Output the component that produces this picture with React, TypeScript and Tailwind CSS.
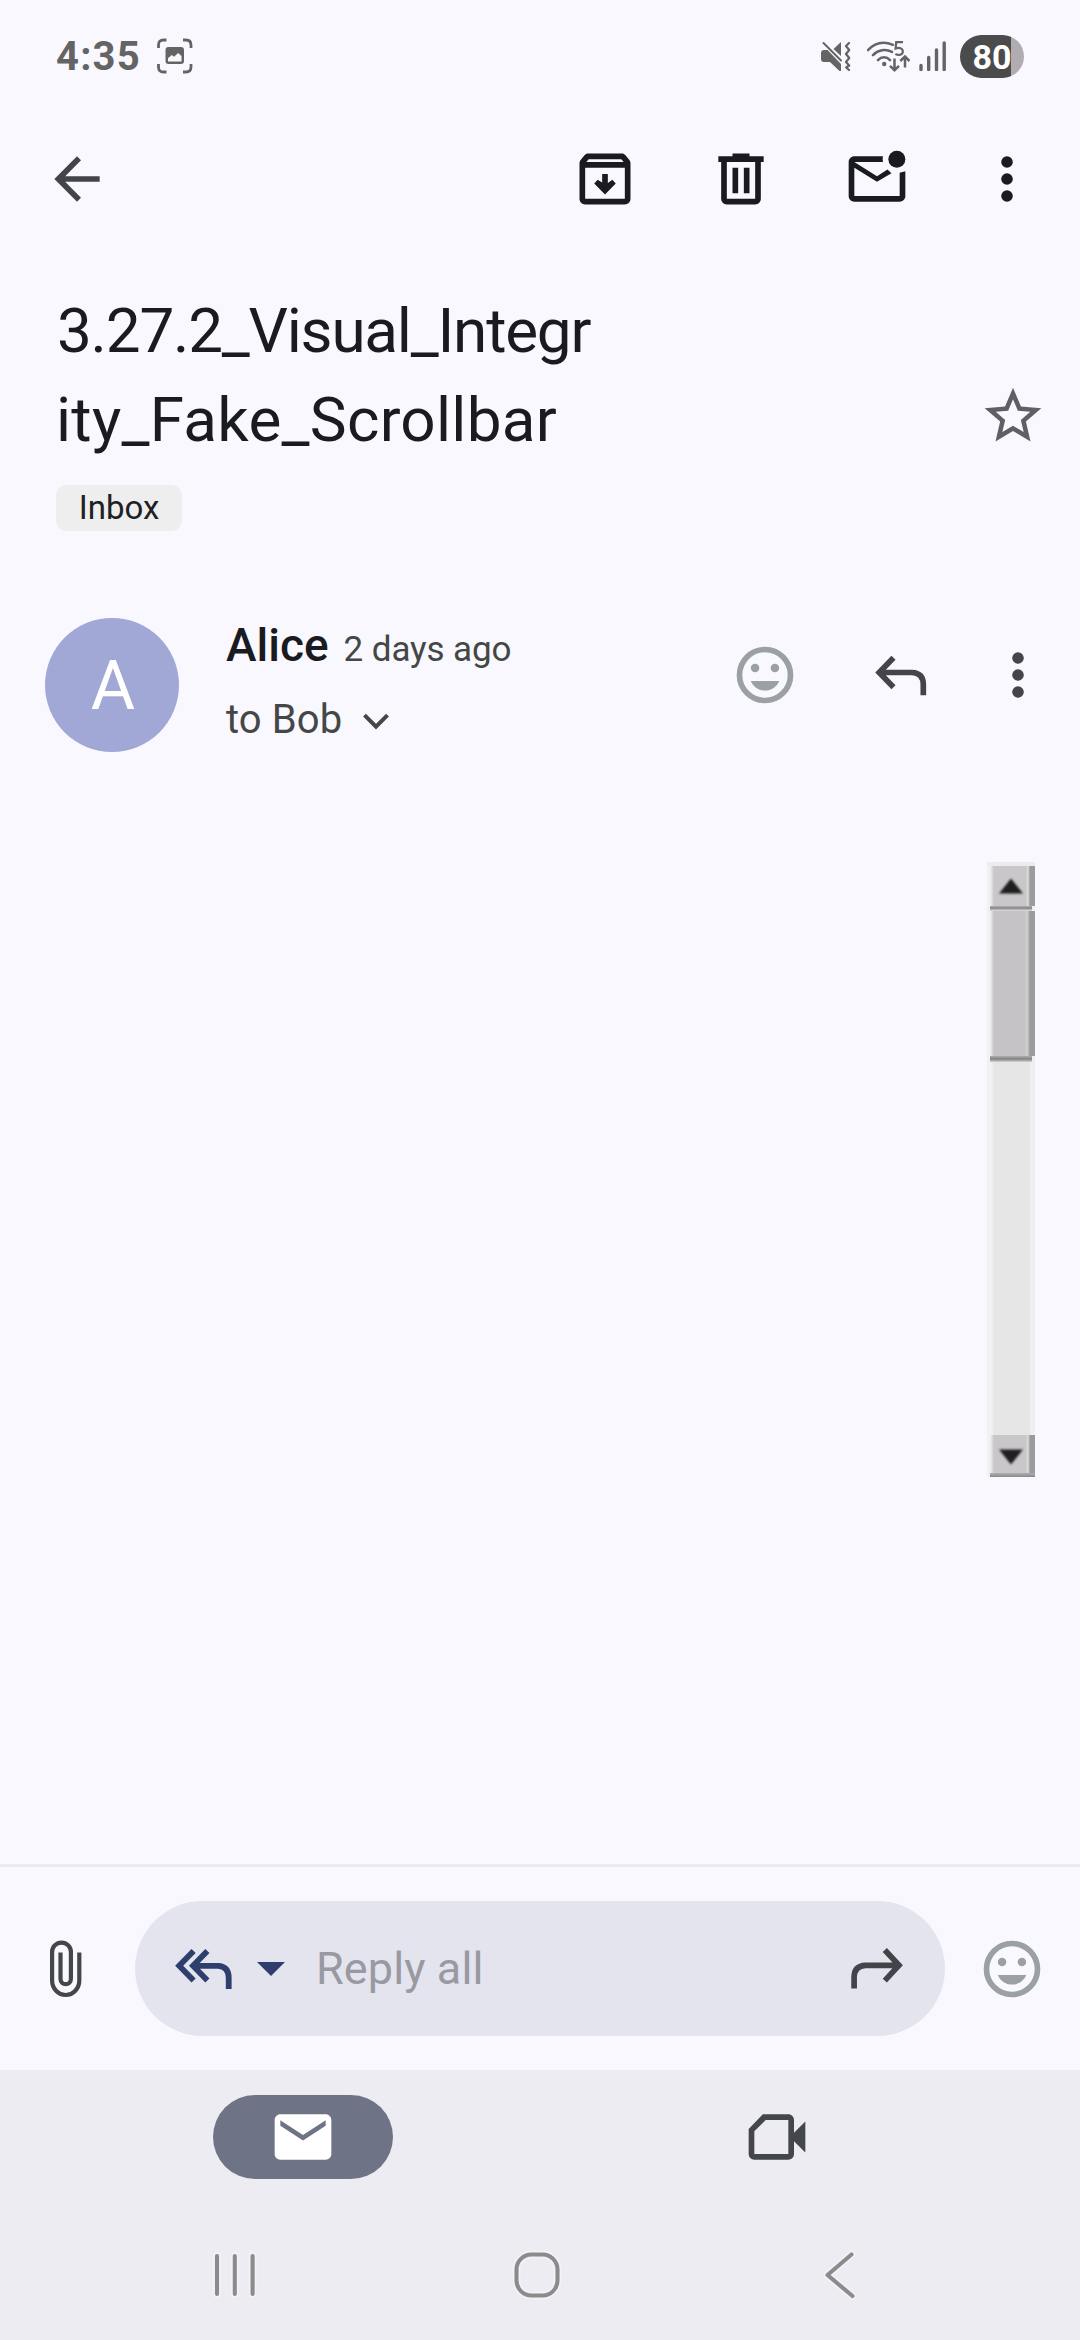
import type { ReactNode } from "react";

type IconProps = { className?: string; children: ReactNode; box?: string };

function Icon({ className = "", children, box = "0 0 24 24" }: IconProps) {
  return (
    <svg viewBox={box} className={`shrink-0 ${className}`} fill="currentColor" aria-hidden="true">
      {children}
    </svg>
  );
}

function StatusBar() {
  return (
    <div className="flex h-[112px] items-center pl-[56px] pr-[56px] text-[#646464]">
      <span className="w-[101px] pt-px text-[40px] leading-[48px] font-bold tracking-[1.2px]">4:35</span>
      <Icon box="0 0 36 36" className="h-[36px] w-[36px]">
        <path
          d="M1.5 10V7Q1.5 2 6.5 2h3M26 2h3q5 0 5 5v3M34 26v3q0 5-5 5h-3M9.500 34h-3q-5 0-5-5v-3"
          fill="none"
          stroke="currentColor"
          strokeWidth="2.800"
        />
        <path
          fillRule="evenodd"
          d="M11.500 9h12.500a3 3 0 0 1 3 3v11a3 3 0 0 1-3 3h-12.500a3 3 0 0 1-3-3v-11a3 3 0 0 1 3-3zM11 23.600h13.500v-5.600l-3.400-3-4 3.700-2.400-1.700-3.700 3.200z"
        />
      </Icon>
      <div className="grow" />
      <Icon box="0 0 30 30" className="h-[30px] w-[30px]">
        <path d="M0 12q0-3 3-3h3.500l13.500 14v7h-1.500L9 21H3q-3 0-3-3zM12.500 8 20 1v14z" />
        <path d="M2.500 2 20 19.500" stroke="currentColor" strokeWidth="2" strokeLinecap="round" />
        <path
          d="m28 2-3 3 3.200 4-3.200 4 3.200 4-3.200 4 3.200 3.500L25.200 26.500 28 29"
          fill="none"
          stroke="currentColor"
          strokeWidth="2.200"
          strokeLinecap="round"
          strokeLinejoin="round"
        />
      </Icon>
      <Icon box="0 0 43 32" className="ml-[16px] h-[32px] w-[43px]">
        <g fill="none" stroke="currentColor" strokeWidth="2.500">
          <path d="M1 10.200C8 2.500 17 1.200 26 4.800M6 15.200c5-5.500 12.500-6.500 19-3.300M11 20.200c3.500-3.800 8.500-3.800 12 0" strokeLinecap="round" />
          <path d="M36 2.200h-6.800l-.6 6.300c3.600-1.400 7.200-.2 7.200 3 0 3.500-4.500 4.300-7.400 2.300" strokeWidth="2.200" />
          <path d="M27.500 18.500v11M23 25.800l4.500 4.400 4.500-4.400M38 27.500V16.800M33.300 21l4.700-4.400 4.500 4.400" />
        </g>
        <circle cx="17.200" cy="24" r="2.200" />
      </Icon>
      <Icon box="0 0 28 30" className="ml-[9px] h-[30px] w-[28px]">
        <path
          d="M2 24.500v4M9.700 16.500v12M17.500 9v19.500M25.200 2v26.500"
          stroke="currentColor"
          strokeWidth="3.400"
          strokeLinecap="round"
        />
      </Icon>
      <div className="ml-[13px] flex h-[43px] w-[64px] items-center justify-center rounded-full bg-[linear-gradient(90deg,#4b4b4b_80%,#afadb2_80%)] pt-px text-[34px] leading-[42px] font-bold text-white">
        80
      </div>
    </div>
  );
}

function MoreIcon({ className }: { className: string }) {
  return (
    <Icon className={className}>
      <circle cx="12" cy="6" r="2.050" />
      <circle cx="12" cy="12" r="2.050" />
      <circle cx="12" cy="18" r="2.050" />
    </Icon>
  );
}

function SmileIcon({ className }: { className: string }) {
  return (
    <Icon className={className}>
      <circle cx="12" cy="12" r="9" fill="none" stroke="currentColor" strokeWidth="2" />
      <circle cx="8.500" cy="9.500" r="1.500" />
      <circle cx="15.500" cy="9.500" r="1.500" />
      <path d="M7 14.100h10c-.8 2.050-2.700 3.400-5 3.400s-4.200-1.350-5-3.400z" />
    </Icon>
  );
}

function AppBar() {
  return (
    <div className="flex h-[134px] items-center pl-[43px] pr-[39px] text-[#1a1b20]">
      <Icon className="h-[68px] w-[68px] text-[#43444c]">
        <path d="M20 11H7.830l5.590-5.590L12 4l-8 8 8 8 1.410-1.410L7.830 13H20z" />
      </Icon>
      <div className="grow" />
      <Icon className="h-[68px] w-[68px]">
        <path
          fillRule="evenodd"
          d="M20.540 5.230l-1.390-1.680C18.880 3.210 18.470 3 18 3H6c-.47 0-.88.21-1.160.55L3.460 5.230C3.170 5.570 3 6.020 3 6.500V19c0 1.100.9 2 2 2h14c1.100 0 2-.9 2-2V6.500c0-.48-.17-.93-.46-1.270zM6.240 5h11.520l.83 1H5.420zM5 19V8h14v11zM11 10.200v3L9.400 12.300 8.200 13.600l3.800 3.900 3.800-3.900-1.200-1.300L13 13.400v-3.200z"
        />
      </Icon>
      <Icon className="ml-[68px] h-[68px] w-[68px]">
        <path fillRule="evenodd" d="M9 3v1H4v2h1v13c0 1.100.9 2 2 2h10c1.100 0 2-.9 2-2V6h1V4h-5V3zM7 6h10v13H7zM9 8v9h2V8zM13 8v9h2V8z" />
      </Icon>
      <Icon className="ml-[68px] h-[68px] w-[68px]">
        <path d="M22 9.300V18c0 1.100-.9 2-2 2H4c-1.100 0-2-.9-2-2V6c0-1.100.9-2 2-2h10.100q-.2 1 0 2H4l8 5 3.700-2.350 1.400 1.300L12 13 4 8v10h16V9.800z" />
        <circle cx="19" cy="5" r="3" />
      </Icon>
      <MoreIcon className="ml-[62px] h-[68px] w-[68px]" />
    </div>
  );
}

function Subject() {
  return (
    <div className="flex h-[372px] pt-[40px] pr-[33px] pl-[56px]">
      <div className="flex grow flex-col items-start">
        <h1 className="text-[62px] leading-[89px] font-normal whitespace-nowrap text-[#1a1b20]">
          <span className="block pl-px tracking-[-1.22px]">3.27.2_Visual_Integr</span>
          <span className="block tracking-[0.28px]">ity_Fake_Scrollbar</span>
        </h1>
        <span className="mt-[21px] flex h-[46px] w-[126px] items-center justify-center rounded-[11px] bg-[#eeeeee] text-[33px] leading-[46px] text-[#202124]">
          Inbox
        </span>
      </div>
      <Icon className="mt-[96px] h-[68px] w-[68px] text-[#5f6066]">
        <path d="M22 9.240l-7.190-.62L12 2 9.190 8.630 2 9.240l5.460 4.730L5.820 21 12 17.270 18.180 21l-1.630-7.030zM12 15.400l-3.760 2.270 1-4.280-3.320-2.880 4.380-.38L12 6.100l1.710 4.040 4.380.38-3.320 2.880 1 4.280z" />
      </Icon>
    </div>
  );
}

function Sender() {
  return (
    <div className="flex h-[134px] pr-[28px] pl-[45px] text-[#444746]">
      <div className="flex size-[134px] items-center justify-center rounded-full bg-[#a1a8d6] pt-[2px] pl-[2px] text-[68px] leading-none text-white">
        A
      </div>
      <div className="ml-[47px] grow pt-[2px]">
        <div className="flex h-[50px] items-baseline leading-[50px]">
          <span className="text-[46px] font-medium text-[#1a1b20]">Alice</span>
          <span className="ml-[15px] text-[35px] tracking-[-0.1px]">2 days ago</span>
        </div>
        <div className="mt-[26px] flex h-[48px] items-center text-[40px] leading-[48px]">
          <span className="tracking-[0.1px]">to Bob</span>
          <Icon box="0 0 26 18" className="mt-[3px] ml-[21px] h-[18px] w-[26px]">
            <path d="M1.500 2.200 13 13.700 24.500 2.200" fill="none" stroke="currentColor" strokeWidth="4" />
          </Icon>
        </div>
      </div>
      <SmileIcon className="mt-[23px] h-[68px] w-[68px] text-[#9aa0a3]" />
      <Icon box="0 0 52 40" className="mt-[38px] ml-[76px] h-[40px] w-[52px] text-[#43454a]">
        <path
          d="M18.500 1.700 4.200 16.500l14.300 14.800M4.200 16.500H37q11.300.5 11.300 12v10.700"
          fill="none"
          stroke="currentColor"
          strokeWidth="5.700"
        />
      </Icon>
      <MoreIcon className="mt-[23px] ml-[57px] h-[68px] w-[68px] text-[#43454a]" />
    </div>
  );
}

function ScrollPicture() {
  return (
    <div className="mt-[110px] mr-[45px] flex h-[615px] w-[48px] flex-col self-end bg-[linear-gradient(90deg,#f1f1f2_0_5px,#e6e6e6_7px_42px,#efeff1_44px)]">
      <div className="flex h-[44px] items-center justify-center border-t-4 border-[#ececef] bg-[linear-gradient(90deg,#f1f1f2_0_3px,#c9c7ca_7px_39px,#dededf_41px,#9b9a9d_43px)] pr-px">
        <Icon box="0 0 26 16" className="h-[16px] w-[26px] text-[#1f1f1f] blur-[1px]">
          <path d="M13 0.500 25 15.500H1z" />
        </Icon>
      </div>
      <div className="mr-[3px] ml-[3px] h-[5px] bg-[linear-gradient(180deg,#b5b3b6,#858386_40%,#e4e3e5)]" />
      <div className="h-[145px] bg-[linear-gradient(90deg,#f1f1f2_0_3px,#c5c3c6_7px_38px,#d3d2d4_40px,#9b9a9d_43px)]" />
      <div className="mr-[3px] ml-[3px] h-[6px] bg-[linear-gradient(180deg,#b0aeb1,#838184_50%,#d4d3d5)]" />
      <div className="h-[373px]" />
      <div className="flex h-[42px] flex-col bg-[linear-gradient(90deg,#f1f1f2_0_3px,#c9c7ca_7px_39px,#dededf_41px,#9b9a9d_43px)]">
        <div className="flex grow items-center justify-center pt-[6px] pr-px">
          <Icon box="0 0 26 16" className="h-[16px] w-[26px] text-[#1f1f1f] blur-[1px]">
            <path d="M1 0.500h24L13 15.500z" />
          </Icon>
        </div>
        <div className="ml-[3px] h-[4px] bg-[linear-gradient(180deg,#b0aeb1,#8a888b)]" />
      </div>
    </div>
  );
}

function ReplyBar() {
  return (
    <div className="flex h-[206px] items-center border-t-[3px] border-[#e8eaed] pr-[34px] pl-[49px]">
      <Icon box="0 0 34 58" className="h-[58px] w-[34px] text-[#444748]">
        <path
          d="M30.300 12.500V40.500a13.600 14.500 0 0 1-27.200 0V12a9.400 9.400 0 0 1 18.800 0V39a5.200 5.200 0 0 1-10.400 0V12.500"
          fill="none"
          stroke="currentColor"
          strokeWidth="4.200"
        />
      </Icon>
      <div className="ml-[52px] flex h-[135px] w-[810px] items-center rounded-full bg-[#e4e4ef] pr-[42px] pl-[40px]">
        <Icon box="0 0 58 40" className="h-[40px] w-[58px] text-[#2f3f6d]">
          <path
            d="M18.600 2 4.200 16.800l14.400 14.800M32.400 2 18 16.800l14.400 14.800M18 16.800h25q10.700.5 10.700 12V40"
            fill="none"
            stroke="currentColor"
            strokeWidth="5.800"
          />
        </Icon>
        <Icon box="0 0 28 14" className="mt-px ml-[24px] h-[14px] w-[28px] text-[#2f3f6d]">
          <path d="M0 0h28L14 14z" />
        </Icon>
        <span className="ml-[31px] grow text-[45px] leading-[54px] tracking-[0.1px] text-[#9999a1]">Reply all</span>
        <Icon box="0 0 52 41" className="h-[41px] w-[52px] text-[#43444a]">
          <path
            d="M33.800 2 48 17.300 33.800 32.600M48 17.300H14.500Q3.100 17.800 3.100 29.500V40.500"
            fill="none"
            stroke="currentColor"
            strokeWidth="5.700"
          />
        </Icon>
      </div>
      <div className="grow" />
      <SmileIcon className="h-[68px] w-[68px] text-[#9aa0a3]" />
    </div>
  );
}

function NavIcon({ className = "", children }: { className?: string; children: ReactNode }) {
  return (
    <Icon box="0 0 50 50" className={`h-[50px] w-[50px] ${className}`}>
      <g fill="none" strokeLinecap="round" strokeLinejoin="round">
        <g stroke="#f3f3f6" strokeWidth="7.500">{children}</g>
        <g stroke="#8b8b8d" strokeWidth="4.100">{children}</g>
      </g>
    </Icon>
  );
}

function BottomBar() {
  return (
    <div className="flex h-[270px] flex-col bg-[#edecf2]">
      <div className="flex items-center pt-[25px] pr-[269px] pl-[213px]">
        <div className="flex h-[84px] w-[180px] items-center justify-center rounded-full bg-[#6f7386] text-white">
          <Icon className="h-[68px] w-[68px]">
            <path
              fillRule="evenodd"
              d="M20 4H4c-1.100 0-2 .9-2 2v12c0 1.100.9 2 2 2h16c1.100 0 2-.9 2-2V6c0-1.100-.9-2-2-2zM20 8l-8 5.200L4 8V6.100l8 5.200 8-5.200z"
            />
          </Icon>
        </div>
        <div className="grow" />
        <Icon className="h-[68px] w-[68px] text-[#43464b]">
          <path
            fillRule="evenodd"
            d="M7 4h9c1.100 0 2 .9 2 2v4.500l4-4v11l-4-4V18c0 1.100-.9 2-2 2H4c-1.100 0-2-.9-2-2V9.200zM8 6 4 10v8h12V6z"
          />
        </Icon>
      </div>
      <div className="mt-[71px] flex h-[50px] items-center pl-[211px]">
        <NavIcon>
          <path d="M6 6v38M23.800 6v38M41.600 6v38" />
        </NavIcon>
        <NavIcon className="ml-[251px]">
          <rect x="4.500" y="4.500" width="41" height="41" rx="15" />
        </NavIcon>
        <NavIcon className="ml-[258px]">
          <path d="M31.500 4.500 7.500 25l25 21" />
        </NavIcon>
      </div>
    </div>
  );
}

export default function App() {
  return (
    <div className="flex h-[2340px] w-[1080px] flex-col overflow-hidden bg-[#faf8ff] font-['Roboto',sans-serif]">
      <StatusBar />
      <AppBar />
      <Subject />
      <Sender />
      <ScrollPicture />
      <div className="grow" />
      <ReplyBar />
      <BottomBar />
    </div>
  );
}
